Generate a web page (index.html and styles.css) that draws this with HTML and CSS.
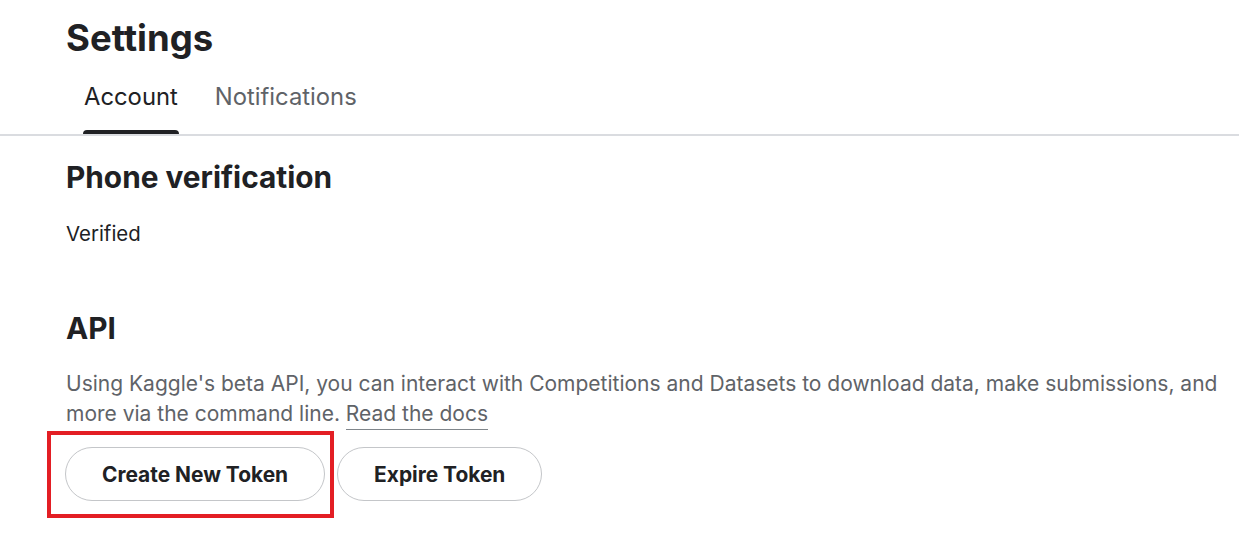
FILE: index.html
```html
<!DOCTYPE html>
<html lang="en">
<head>
<meta charset="utf-8">
<title>Settings</title>
<link rel="stylesheet" href="styles.css">
</head>
<body>
<header class="page-header">
  <h1 class="page-title">Settings</h1>
</header>
<nav class="tabs">
  <div class="tab tab-active">Account</div>
  <div class="tab">Notifications</div>
</nav>
<main class="content">
  <section class="section">
    <h2 class="section-title">Phone verification</h2>
    <p class="status">Verified</p>
  </section>
  <section class="section section-api">
    <h2 class="section-title">API</h2>
    <p class="description">Using Kaggle's beta API, you can interact with Competitions and Datasets to download data, make submissions, and more via the command line. <a class="docs-link" href="#">Read the docs</a></p>
    <div class="actions">
      <button class="btn">Create New Token</button>
      <button class="btn">Expire Token</button>
      <span class="highlight-box"></span>
    </div>
  </section>
</main>
</body>
</html>
```
FILE: styles.css
```css
* { box-sizing: border-box; }
html, body { margin: 0; padding: 0; background: #fff; }
body {
  min-height: 545px;
  font-family: Inter, "Noto Sans", "Liberation Sans", sans-serif;
  color: #202124;
}
.page-header { padding: 14px 0 0 66px; }
.page-title {
  margin: 0;
  font-size: 36.5px;
  line-height: 48px;
  font-weight: 700;
  color: #202124;
}
.tabs {
  display: flex;
  gap: 35px;
  padding-left: 83px;
  margin-top: 19px;
  border-bottom: 2px solid #dadce0;
}
.tab {
  position: relative;
  font-size: 23.8px;
  line-height: 32px;
  padding: 0 1px 21px;
  color: #5f6368;
}
.tab-active { color: #202124; }
.tab-active::after {
  content: "";
  position: absolute;
  left: 0;
  right: 0;
  bottom: 0;
  height: 4px;
  background: #202124;
  border-radius: 4px 4px 0 0;
}
.content { padding: 0 16px 40px 66px; }
.section-title {
  margin: 0;
  font-size: 29.8px;
  line-height: 40px;
  font-weight: 700;
  color: #202124;
}
.section { padding-top: 21px; }
.status {
  margin: 23px 0 0;
  font-size: 20.4px;
  line-height: 28px;
  color: #202124;
}
.section-api { padding-top: 60px; }
.description {
  margin: 21px 0 0;
  font-size: 21px;
  line-height: 30px;
  color: #5f6368;
}
.docs-link {
  color: #5f6368;
  text-decoration: none;
  border-bottom: 1px solid #80868b;
  padding-bottom: 3px;
}
.actions {
  position: relative;
  display: flex;
  gap: 12px;
  margin-top: 18px;
  margin-left: -1px;
}
.btn {
  height: 54px;
  padding: 0 36px;
  border: 1px solid #c4c6c9;
  border-radius: 27px;
  background: #fff;
  font-family: inherit;
  font-size: 20.9px;
  font-weight: 700;
  color: #202124;
}
.highlight-box {
  position: absolute;
  left: -18px;
  top: -16px;
  width: 287px;
  height: 87px;
  border: 4px solid #e31e24;
  pointer-events: none;
}
```
